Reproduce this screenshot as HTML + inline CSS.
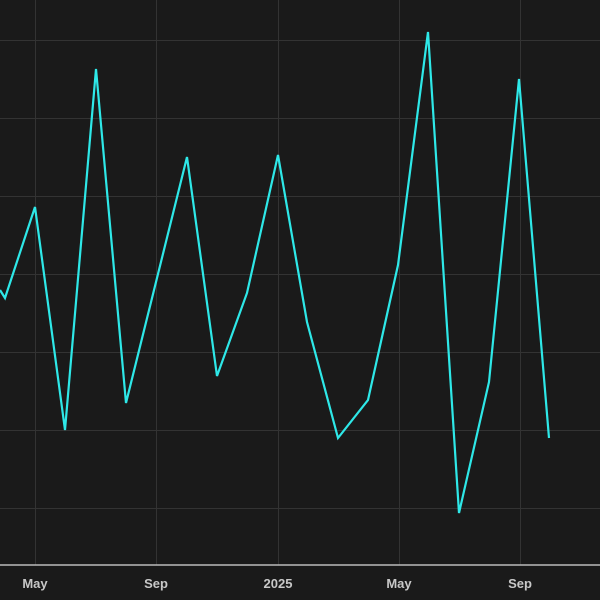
<!DOCTYPE html><html><head><style>body{margin:0;background:#1a1a1a;}svg{display:block}</style></head><body>
<svg width="600" height="600" xmlns="http://www.w3.org/2000/svg">
<rect width="600" height="600" fill="#1a1a1a"/>
<g stroke="#333" stroke-width="1">
<line x1="0" y1="40.5" x2="600" y2="40.5"/><line x1="0" y1="118.5" x2="600" y2="118.5"/><line x1="0" y1="196.5" x2="600" y2="196.5"/><line x1="0" y1="274.5" x2="600" y2="274.5"/><line x1="0" y1="352.5" x2="600" y2="352.5"/><line x1="0" y1="430.5" x2="600" y2="430.5"/><line x1="0" y1="508.5" x2="600" y2="508.5"/>
<line x1="35.5" y1="0" x2="35.5" y2="565"/><line x1="156.5" y1="0" x2="156.5" y2="565"/><line x1="278.5" y1="0" x2="278.5" y2="565"/><line x1="399.5" y1="0" x2="399.5" y2="565"/><line x1="520.5" y1="0" x2="520.5" y2="565"/>
</g>
<line x1="0" y1="565" x2="600" y2="565" stroke="#bbb" stroke-width="1.5"/>
<polyline fill="none" stroke="#2ee8e8" stroke-width="2.2" stroke-linejoin="miter" points="0,290 5,298 35,207 65,430 96,69 126,403 187,157 217,376 247,293 278,155 307,322 338,438 368,400 398,265 428,32 459,513 489,382 519,79 549,438"/>
<g fill="#c8c8c8" font-family="Liberation Sans, sans-serif" font-size="13" font-weight="bold" text-anchor="middle">
<text x="35" y="588">May</text><text x="156" y="588">Sep</text><text x="278" y="588">2025</text><text x="399" y="588">May</text><text x="520" y="588">Sep</text>
</g>
</svg></body></html>
